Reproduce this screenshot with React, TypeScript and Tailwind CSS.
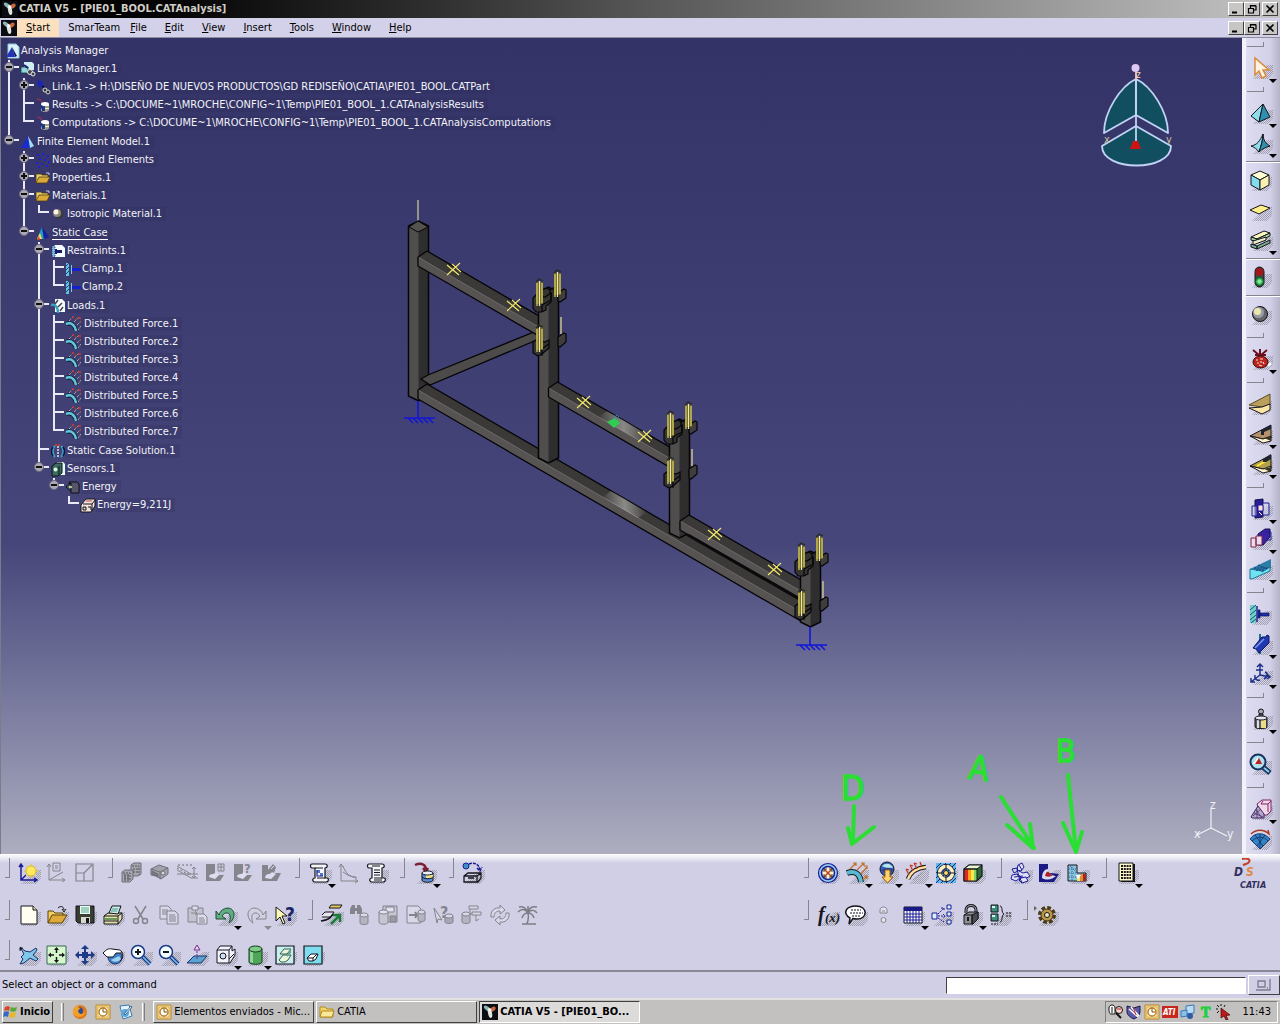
import React from 'react';

const K = '#15151c';
const G = '#84848c';
const N = '#1c1c96';

// ---- toolbar glyphs, all on a 24x24 grid ----
const glyphs: Record<string, React.ReactNode> = {
    // bottom, row 1
    axisSun: (<>
        <path d="M4 3v16h16M2 6l2-3 2 3M17 17l3 2-3 2M4 19l5-5" fill="none" stroke={N} strokeWidth="1.5" />
        <path d="M14 3v14M7 10h14M9 5l10 10M19 5L9 15" stroke="#e6cf3a" />
        <circle cx="14" cy="10" r="5" fill="#ffe95c" stroke="#d8b92c" />
    </>),
    axisDoc: (<g fill="none" stroke={G}>
        <path d="M4 3v16h16M2 6l2-3 2 3M17 17l3 2-3 2M4 19l14-8M8 2h7v8H8zM10 5h3M10 7h3" />
    </g>),
    frame: (<path d="M3 3h17v17H3zM3 12h8v8M11 12l8-8" fill="none" stroke={G} strokeWidth="1.2" />),
    boxes: (<g fill="#a5a5ad" stroke="#6f6f78">
        <path d="M11 4l3-2h7v11l-3 2h-7z" /><path d="M2 11l3-2h8v9l-3 3H2z" />
        <path d="M12 5h7v9M3 12h7v8M13 8h5M13 11h5M4 15h6M4 18h6M5 13v7M8 13v7" fill="none" stroke="#55555e" strokeDasharray="2 1" />
    </g>),
    shell: (<g stroke="#6f6f78">
        <path d="M3 8l8-4 9 3v6l-7 5-5-3-5-1z" fill="#a2a2aa" /><path d="M3 8l9 3 8-4M12 11v7" fill="none" /><circle cx="15" cy="12" r="2" fill="#d9d8ea" /><path d="M4 10l6 3v3l-6-3z" fill="#777780" />
    </g>),
    section: (<g fill="none" stroke={G}>
        <path d="M1 5l14 8h7M1 9l14 8h7M18 6v11M16 8l2-2 2 2M16 15l2 2 2-2M1 13h14" /><path d="M1 7l14 8M2 4h14" stroke="#6f6f78" strokeDasharray="2 2" />
    </g>),
    vmA: (<g><path d="M2 3h9v9h4v2h5l-4 6H2z" fill="#85858e" /><path d="M5 16c1-5 4-1 7-5l4 2-5 5z" fill="#dddcf0" /><path d="M14 3h6v7h-6zM14 6h6M17 3v7" fill="none" stroke={G} /></g>),
    vmB: (<g><path d="M2 3h9v9h4v2h5l-4 6H2z" fill="#85858e" /><path d="M5 16c1-5 4-1 7-5l4 2-5 5z" fill="#dddcf0" /><text x="12" y="12" fontSize="13" fontWeight="bold" fill="#85858e">?</text></g>),
    vmC: (<g><path d="M2 4h6v5l5-6 3 3-2 6h7l-4 8H2z" fill="#85858e" /><path d="M5 17c1-6 4-2 7-6l4 2-5 5z" fill="#dddcf0" /><path d="M11 8l3-3" stroke="#dddcf0" /></g>),
    reportPic: (<g stroke={K} strokeWidth="1.200">
        <path d="M4 3h13c3 0 3 4 0 4v10h2c2 0 2 4-1 4H7c-3 0-3-4 0-4V7H4c-2 0-2-4 0-4z" fill="#f4f4fa" /><path d="M7 7h8M9 17h8" fill="none" /><path d="M9 9h3v3H9zM12 12h3v3h-3z" fill="#4a7bd0" stroke="none" /><path d="M9 9v6h6" stroke={N} fill="none" />
    </g>),
    graph: (<path d="M4 3v17h17M2 6l2-3 2 3M18 18l3 2-3 2M6 5c3 8 7 11 14 12M6 11c4 3 8 5 13 5" fill="none" stroke={G} />),
    reportTxt: (<g stroke={K} strokeWidth="1.200">
        <path d="M4 3h13c3 0 3 4 0 4v10h2c2 0 2 4-1 4H7c-3 0-3-4 0-4V7H4c-2 0-2-4 0-4z" fill="#f4f4fa" /><path d="M9 9h6M9 11.500h6M9 14h6M7 5h8M9 17h8M9 19h8" fill="none" />
    </g>),
    dbArrow: (<g>
        <path d="M2 4c7-3 11 0 11 5M10 7l3 4 2-4" fill="none" stroke="#7d1f33" strokeWidth="2.4" />
        <path d="M9 12v7c0 3 11 3 11 0v-7z" fill="#5b8bd0" stroke={K} /><path d="M13 14h7v3h-7z" fill="#f1e58a" /><ellipse cx="14.500" cy="12" rx="5.500" ry="2" fill="#e9f2fb" stroke={K} /><path d="M9 15.500c0 3 11 3 11 0" fill="none" stroke={K} />
    </g>),
    boxRot: (<g fill="none" stroke={K}>
        <circle cx="5" cy="5" r="3" fill="#3d8fc4" stroke={N} /><path d="M8 3c5-2 10 0 11 6M16 7l3 3 2-4" stroke={N} strokeWidth="1.500" strokeDasharray="3 1" /><path d="M3 15l4-3h13v5l-3 4H3zM3 15h13v6M16 15l4-3M7 17h6" strokeWidth="1.300" />
    </g>),
    mesh: (<g>
        <circle cx="12" cy="12" r="9.500" fill="#8fd0ec" stroke={N} strokeWidth="1.200" /><circle cx="12" cy="12" r="6.500" fill="#fff0cd" stroke={N} strokeWidth="1.500" /><path d="M8.500 8.500l7 7M15.500 8.500l-7 7" stroke="#b4471d" strokeWidth="1.500" /><path d="M8 11V8h3M13 8h3v3M16 13v3h-3M11 16H8v-3" stroke={K} fill="none" strokeWidth=".8" />
    </g>),
    distForce: (<g>
        <path d="M2 12c8-3 13 1 14 9" fill="none" stroke={K} strokeWidth="6" /><path d="M2 12c8-3 13 1 14 9" fill="none" stroke="#59b8d4" strokeWidth="4" />
        <path d="M5 8l6-6M12 9l7-7M16 13l6-7M18 19l4-4M8 2h3v3M16 2h3v3M19 5h3v3M19 15h3v3" stroke="#c07024" fill="none" strokeWidth="1.200" />
    </g>),
    sphereDown: (<g>
        <circle cx="12" cy="8" r="7" fill="#2e63b8" stroke={K} /><path d="M7 5c4-4 10-2 11 2-3-1-5 1-11-2z" fill="#b9e6ee" /><path d="M6 9c3 2 4 4 6 5 3 0 5-3 6-5-4-3-8-2-12 0z" fill="#2a3f8f" />
        <path d="M10 9h5v7h3l-5.500 6L7 16h3z" fill="#ffd36b" stroke="#9a5d14" />
    </g>),
    beamForce: (<g fill="none">
        <path d="M3 18c3-8 9-11 18-12" stroke={K} strokeWidth="4.500" /><path d="M3 18c3-8 9-11 18-12" stroke="#ffe0a0" strokeWidth="2.500" />
        <path d="M4 14L1 8M8 10L5 4M12 8L9 2M17 6l-2-5M1 8l3 1M5 4l3 1M9 2l3 1" stroke="#c0371d" strokeWidth="1.200" />
        <path d="M8 19l10-8" stroke={G} strokeDasharray="2 1" />
    </g>),
    wheel: (<g>
        <rect x="2" y="2" width="20" height="20" fill="#5fb9e6" /><path d="M2 7l5-5M2 12L12 2M2 17L17 2M2 22L22 2M7 22L22 7M12 22l10-10M17 22l5-5" stroke={N} />
        <circle cx="12" cy="12" r="6.500" fill="none" stroke={K} strokeWidth="5" /><circle cx="12" cy="12" r="6.500" fill="none" stroke="#fff0c4" strokeWidth="3.500" /><path d="M12 3v18M3 12h18" stroke={K} /><circle cx="12" cy="12" r="2.500" fill="#ffd36b" stroke={K} />
    </g>),
    rainbow: (<g>
        <path d="M2 8l5-4h13v11l-5 5H2z" fill="#2c6a34" stroke={K} strokeWidth="1.200" /><path d="M2 8h4v12H2z" fill="#d92c1d" /><path d="M6 8h3v12H6z" fill="#ffa21f" /><path d="M9 8h3v12H9z" fill="#ffe94a" /><path d="M12 8h3v12h-3z" fill="#7ed66b" /><path d="M2 8l5-4h13l-5 4z" fill="#e8f5d0" stroke={K} /><path d="M2 8h13v12H2z" fill="none" stroke={K} />
    </g>),
    figure: (<g fill="#dfe0f6" stroke={N}>
        <path d="M9 4l4-2 2 4-3 4-4-1z" /><path d="M8 9l6 3 4-1 3 4-5 3-6-3z" /><path d="M8 13l-5 1-1 4 5 2 5-4z" /><path d="M12 17l5-1 2 4-6 2-3-3z" /><path d="M3 8l5-1 1 3-4 2zM10 4l3 5M5 16l9-1M8 13l5 8" fill="none" />
    </g>),
    vonMises: (<g>
        <path d="M2 3h9v9h3l8 1-5 8H2z" fill="#1a1a86" /><path d="M5 17c0-6 3-9 6-9v4c4 1 5 3 8 3-3 3-9 5-14 2z" fill="#d8dcf2" /><path d="M8 15c1-4 2-5 4-4 0 2 3 3 4 3-2 2-5 2-8 1z" fill="#b02020" />
    </g>),
    deform: (<g>
        <path d="M2 4h9v8h9v8H2z" fill="#8cc3dc" stroke={K} /><path d="M3 8h8M3 12h8M3 16h10M6 4v16M4 5l7 7" stroke="#2a6a94" strokeDasharray="1 1" />
        <path d="M11 15h3v5h-3z" fill="#e7e46a" /><path d="M14 13h3v7h-3z" fill="#e08a3a" /><path d="M17 13h3v7h-3z" fill="#a8261f" /><path d="M10 14h5l-3 4z" fill="#fff" />
    </g>),
    calc: (<g><path d="M6 3h14v18H6z" fill={K} /><path d="M4 2h14v18H4z" fill="#fdf8c8" stroke={K} /><path d="M6 5h10M6 8h10M6 11h10M6 14h10M6 17h10" stroke={K} strokeWidth="2" strokeDasharray="2 .8" /></g>),
    // bottom, row 2
    newDoc: (<g><path d="M4 3h12l4 4v14H4z" fill="#fffef0" stroke={K} /><path d="M16 3v4h4" fill="#e6e3b0" stroke={K} /></g>),
    open: (<g stroke="#5a430c"><path d="M3 20V8h5l2 2h8v3" fill="#f1cf5e" /><path d="M3 20l4-8h15l-5 8z" fill="#e0a93c" /><path d="M13 5c3-3 6-1 6 2M17 6l2 3 2-3" fill="none" stroke={K} /></g>),
    save: (<g><path d="M3 3h18v17H5l-2-2z" fill="#3b3d33" stroke={K} /><path d="M7 3h10v8H7z" fill="#eafff6" /><path d="M8 5h8M8 7h8M8 9h8" stroke="#58a08c" /><path d="M8 14h9v6H8z" fill="#d7d8cd" /><path d="M13 15h3v5h-3z" fill={K} /></g>),
    print: (<g stroke={K}><path d="M3 13l4-3h14v6l-4 5H3z" fill="#e4dfae" /><path d="M8 10l3-7h9l-3 8z" fill="#cbeee8" /><path d="M11 6h6M10 8h6" stroke="#439788" /><path d="M3 13h14l4-3M17 13v8" fill="none" /><path d="M4 15h12v2H4z" fill="#6b9a58" stroke="none" /><path d="M3 18h14" /></g>),
    cut: (<g fill="none" stroke={G} strokeWidth="1.500"><path d="M6 3l8 13M17 3L9 16" /><circle cx="7" cy="18" r="2.500" /><circle cx="16" cy="18" r="2.500" /></g>),
    copy: (<g stroke={G} fill="#d7d6ea"><path d="M3 3h8l3 3v10H3z" /><path d="M5 7h6M5 9h6M5 11h6" /><path d="M10 8h8l3 3v10H10z" /><path d="M12 12h6M12 14h7M12 16h7M12 18h7" /></g>),
    paste: (<g stroke={G} fill="#c3c2d2"><path d="M3 5h15v14H3z" /><path d="M7 3h6v4H7z" fill="#dddcee" /><path d="M12 11h7l3 3v7H12z" fill="#dddcee" /><path d="M14 15h5M14 17h6M14 19h6M6 10h6l-2-2M12 10l-2 2" fill="none" /></g>),
    undo: (<g><path d="M5 12c2-8 14-10 15-1 0 5-3 8-5 9 2-4 2-11-3-10-2 0-3 2-4 3l4 3H2V8z" fill="#5fae84" stroke="#1f4a34" /></g>),
    redo: (<g><path d="M19 12C17 4 5 2 4 11c0 5 3 8 5 9-2-4-2-11 3-10 2 0 3 2 4 3l-4 3h10V8z" fill="#d2d1e4" stroke={G} /></g>),
    what: (<g><path d="M3 4v14l4-4 3 7 2-1-3-7h5z" fill="#fff9b8" stroke={K} /><text x="12" y="18" fontSize="19" fontWeight="bold" fill="#1b2468">?</text></g>),
    swap: (<g><path d="M9 5l2-3h11l-2 3H9z" fill="#e7cf62" stroke={K} /><path d="M2 12l3-3h9l-3 5H2" fill="#e2e1ec" stroke={K} /><path d="M1 18c6-1 9-2 12-7" fill="none" stroke={K} strokeWidth="1.500" /><path d="M11 21l8-8M13 12h7v7" fill="none" stroke="#1d7a3a" strokeWidth="2.500" /></g>),
    findDb: (<g fill={G}><path d="M2 6l2-4h3v9H2zM9 2h3l2 4v5H9zM7 5h2v3H7z" /><path d="M12 12v8c0 2 8 2 8 0v-8z" fill="#b4b3c2" stroke={G} /><ellipse cx="16" cy="12" rx="4" ry="2" fill="#dcdbec" stroke={G} /></g>),
    saveDb: (<g stroke={G} fill="#c6c5d4"><path d="M7 3h14v16H7z" /><path d="M10 4h8v5h-8z" fill="#e2e1f2" /><path d="M3 9v10c0 3 9 3 9 0V9z" /><ellipse cx="7.500" cy="9" rx="4.500" ry="2" fill="#e2e1f2" /><path d="M14 13h6v6h-6z" fill="#9a9aa4" /></g>),
    docDb: (<g stroke={G} fill="#d9d8ea"><path d="M3 3h11l3 3v14H3z" /><path d="M5 12h8l-2-3M13 12l-2 3" strokeWidth="2" fill="none" /><path d="M14 9v8c0 2 7 2 7 0V9z" fill="#b4b3c2" /><ellipse cx="17.500" cy="9" rx="3.500" ry="2" /></g>),
    askDb: (<g stroke={G} fill="#d9d8ea"><path d="M2 5l8 12-4-1-1 4z" /><text x="8" y="15" fontSize="16" fontWeight="bold" fill={G} stroke="none">?</text><path d="M13 13v6c0 2 8 2 8 0v-6z" fill="#a7a6b4" /><ellipse cx="17" cy="13" rx="4" ry="2" /></g>),
    treeDb: (<g stroke={G} fill="#d9d8ea"><path d="M9 3h9v3H9zM12 9h9v3h-9zM10 6v5h2M16 12v6l3-2" /><path d="M2 11v8c0 2 8 2 8 0v-8z" fill="#b4b3c2" /><ellipse cx="6" cy="11" rx="4" ry="2" /></g>),
    refresh: (<g fill="#d9d8ea" stroke={G}><path d="M3 14c-1-6 4-10 9-9V2l5 5-5 4V8c-4 0-6 2-6 6z" /><path d="M21 10c1 6-4 10-9 9v3l-5-5 5-4v3c4 0 6-2 6-6z" /></g>),
    palm: (<g stroke="#7d7d86" fill="none" strokeWidth="1.500"><path d="M12 10c1 4 0 8-1 11M12 10C9 5 5 6 2 9M12 10c-2-6-6-7-9-6M12 10c1-6 5-7 9-6M12 10c3-4 7-3 9 0M12 10c-3 0-5 2-6 5M12 10c3 0 5 2 6 5M12 9V3M6 21h14" /></g>),
    fx: (<g fill={K} fontStyle="italic" fontWeight="bold" fontFamily="Liberation Serif, serif"><text x="2" y="18" fontSize="20">f</text><text x="9" y="19" fontSize="13">(x)</text></g>),
    bubble: (<g><path d="M12 3c12 0 12 13 1 13-2 0-3 0-4-.5L5 21l1-6C-2 10 2 3 12 3z" fill="#fff" stroke={K} strokeWidth="1.500" /><path d="M7 7h10M6 10h13M8 13h8" stroke={K} strokeDasharray="2 1" /></g>),
    lockOff: (<g stroke={G} fill="#e3e2f2"><path d="M8 10V7c0-4 7-4 7 0v3H8zM10 8h3" /><circle cx="11.500" cy="17" r="2.500" /></g>),
    table: (<g><path d="M3 4h18v16H3z" fill="#fff" stroke={K} /><path d="M3 4h18v4H3z" fill="#1a1a86" /><path d="M3 11h18M3 14h18M3 17h18M6 8v12M9 8v12M12 8v12M15 8v12M18 8v12" stroke={N} /></g>),
    relations: (<g fill="#d8f0f4" stroke={N}><path d="M2 10h5v6H2zM17 2h4v4h-4zM17 9h4v4h-4zM17 17h4v4h-4z" /><path d="M8 11l6-6M8 13h7M8 15l6 4M11 5h3v3M13 11l2 2-2 2" fill="none" strokeDasharray="2 1" /></g>),
    lock: (<g stroke={K}><path d="M7 10V7c0-6 10-6 10 0v3" fill="none" strokeWidth="3" /><path d="M7 10V7c0-6 10-6 10 0v3" fill="none" stroke="#a9aaae" /><path d="M5 12l5-3h9v7l-5 5H5z" fill="#8d8f93" /><path d="M13 12l6-3v7l-5 5h-1z" fill="#4a4b50" /><path d="M5 12h8v9" fill="none" /><path d="M9 14v4" strokeWidth="2" /></g>),
    brace: (<g><path d="M3 2h7v7H3zM3 11h7v7H3z" fill="#3e8f7c" stroke={K} /><path d="M4 3h3v2H4zM4 12h3v2H4z" fill="#d8f4ec" /><path d="M12 3c3 0 1 7 4 8-3 1-1 8-4 8" fill="none" stroke={K} /><path d="M18 10h5M18 13h5M3 21h7" stroke={K} strokeDasharray="2 1" /></g>),
    gear: (<g><path d="M-1 3l3 2-3 3z" fill="#6a6a50" /><circle cx="12" cy="12" r="7" fill="none" stroke="#4b3a12" strokeWidth="4" strokeDasharray="3.500 2" /><circle cx="12" cy="12" r="6" fill="#b8964c" stroke="#4b3a12" /><circle cx="12" cy="12" r="2.500" fill="#f3e7bc" stroke={K} /></g>),
    // bottom, row 3
    plane: (<g><path d="M3 4l5 4 5 1 6-4 1 2-4 5 5 4-2 2-6-3-6 5-4 1 3-5-2-2 3-3z" fill="#7fc8ea" stroke="#1c2f66" /><path d="M4 4L3 8M2 6l4-1" stroke={K} /></g>),
    fit: (<g><path d="M2 3h19v18H2z" fill="#d6f7cb" stroke="#336a52" /><path d="M11.500 5v5M11.500 14v5M4 12h5M14 12h5" stroke={K} strokeWidth="1.500" /><path d="M9 7l2.500-3L14 7zM9 17l2.500 3 2.500-3zM6 9.500L3 12l3 2.500zM17 9.500l3 2.500-3 2.500z" fill={K} /></g>),
    pan: (<g fill="#1d3b86"><path d="M11 5h2v14h-2zM5 11h14v2H5z" /><path d="M8 6l4-4 4 4zM8 18l4 4 4-4zM6 8l-4 4 4 4zM18 8l4 4-4 4z" /><path d="M9 9h6v6H9z" /></g>),
    rotate: (<g stroke={K}><circle cx="14" cy="14" r="7" fill="#3e7fc8" stroke="#1c2f66" /><path d="M10 17c3 3 8 2 10-1l-2-3z" fill="#9fd2f0" stroke="none" /><path d="M2 10c3-3 5-5 9-4l8 1c2 1 2 3 0 3h-4l-3 4H6z" fill="#fff" /><path d="M20 8c3 3 2 8-1 10" fill="none" /></g>),
    zoomIn: (<g><path d="M14 14l7 7" stroke="#1b3a86" strokeWidth="4" /><path d="M14 14l7 7" stroke="#7fc4ea" strokeWidth="1.500" /><circle cx="9" cy="9" r="6.500" fill="#f4fbff" stroke="#1b3a86" strokeWidth="1.500" /><path d="M9 6v6M6 9h6" stroke={K} strokeWidth="2" /></g>),
    zoomOut: (<g><path d="M14 14l7 7" stroke="#1b3a86" strokeWidth="4" /><path d="M14 14l7 7" stroke="#7fc4ea" strokeWidth="1.500" /><circle cx="9" cy="9" r="6.500" fill="#f4fbff" stroke="#1b3a86" strokeWidth="1.500" /><path d="M6 9h6" stroke={K} strokeWidth="2" /></g>),
    normal: (<g><path d="M2 20l7-7h13l-6 7z" fill="#5aa3d0" stroke="#1c2f66" /><path d="M12 16V7" stroke="#7a2c8c" strokeDasharray="2 1" /><path d="M9 7l3-5 3 5z" fill="#e9d4f4" stroke="#7a2c8c" /></g>),
    isoView: (<g stroke={K} fill="#f2f3fb"><path d="M3 7l3-4h12v5l3-2v6l-5 8H3z" /><path d="M3 7h12v13M15 7l3-4M15 16l5-5" fill="none" /><circle cx="9" cy="13" r="3" fill="#cfe0f4" /></g>),
    shading: (<g><path d="M5 6v13c0 3 13 3 13 0V6z" fill="#4fa65a" stroke="#153a1c" /><path d="M6 7v12l3 1V8z" fill="#8fd69a" /><ellipse cx="11.500" cy="6" rx="6.500" ry="3" fill="#7ecb87" stroke="#153a1c" /></g>),
    hideShow: (<g><path d="M3 3h18v18H3z" fill="#c9eef0" stroke={K} strokeWidth="1.200" /><path d="M7 11l4-5h7l-4 5z" fill="#e9f7d8" stroke="#356054" /><path d="M6 17l4-5h8l-3 5-3 2H8z" fill="#e9f7d8" stroke="#356054" /><path d="M14 12l4-6v4l-4 4z" fill="#6aa590" /></g>),
    swapSpace: (<g><path d="M3 3h18v18H3z" fill="#7fdcee" stroke={K} strokeWidth="1.200" /><path d="M6 15l4-4h7l-2 5-3 2H8z" fill="#fff" stroke={K} /><path d="M6 15h6l4-4M12 15v3" fill="none" stroke={K} /></g>),
    // right toolbar
    arrow: (<path d="M6 2v17l4-4 3 7 4-2-3-6h6z" fill="#fff4e2" stroke="#d98a3c" strokeWidth="1.500" />),
    tetra: (<g stroke={K}><path d="M2 15L14 3l-4 18z" fill="#8fdcea" /><path d="M14 3l7 13-11 5z" fill="#2f8fae" /></g>),
    tetra2: (<g stroke={K}><path d="M2 15c6-1 9-5 12-12 0 6-2 12-4 18-2-3-5-5-8-6z" fill="#8fdcea" /><path d="M14 3c0 6 3 10 7 12-4 1-8 3-11 6 2-6 4-12 4-18z" fill="#2f8fae" /></g>),
    cube: (<g stroke={K}><path d="M3 7l9-4 9 4-9 5z" fill="#fffbd0" /><path d="M3 7l9 5v10l-9-5z" fill="#83dcec" /><path d="M21 7l-9 5v10l9-5z" fill="#f8efb0" /></g>),
    sheet: (<path d="M2 12l11-5 9 3-11 6z" fill="#fdf08a" stroke={K} />),
    ibeam: (<g stroke={K}><path d="M2 9L15 3l6 2-13 6z" fill="#fbf7c0" /><path d="M2 9l6 2v3l-6-2zM8 11l13-6v3L8 14z" fill="#a8cf98" /><path d="M4 13v4l13-5V9z" fill="#e9efc8" /><path d="M2 16l6 2v3l-6-2zM8 18l13-6v3L8 21z" fill="#79b08a" /></g>),
    traffic: (<g><rect x="7" y="2" width="9" height="20" rx="4.500" fill="#3b4a42" stroke={K} /><circle cx="11.500" cy="7" r="4" fill="#a3161c" /><circle cx="11.500" cy="16.500" r="4" fill="#3dbb5c" stroke="#0d4f24" /><circle cx="11.500" cy="16.500" r="2" fill="#8ae8a0" /></g>),
    ball: (<g><circle cx="12" cy="12" r="7.500" fill="#62646a" stroke={K} /><circle cx="10.500" cy="10.500" r="5.500" fill="#9a9ca0" /><circle cx="9.500" cy="9.500" r="3.500" fill="#ece6b0" /></g>),
    bug: (<g><path d="M4 3l6 5M11 2v6M18 3l-6 5M6 8h11" stroke="#6a1120" strokeWidth="2" /><ellipse cx="11.500" cy="15" rx="7.500" ry="6" fill="#b8241f" stroke="#3c070c" /><path d="M7 13h2M8 16h2M10 18l3 1M11 12h3M14 15l1 2M12 14v2" stroke="#ffd9c8" strokeWidth="1.200" fill="none" /><path d="M19 19l3-3" stroke="#fff" strokeWidth="2" /></g>),
    slab: (<g><path d="M1 13L22 2v11l-8 2z" fill="#b8a05c" stroke="#5d4a1c" /><path d="M1 16l13-1 8-3v6l-8 4z" fill="#fbe6a8" stroke={K} /></g>),
    slab2: (<g><path d="M1 14L22 3v13l-8 1z" fill="#b5906a" stroke={K} /><path d="M1 14l13 3 8-3v5l-8 2z" fill="#fff4d0" stroke={K} /><path d="M12 8l10-5v4l-7 3v3h-3z" fill="#20242e" /><path d="M15 16l7 3v-5z" fill="#3a3320" /></g>),
    slab3: (<g><path d="M1 14L22 3v13l-8 1z" fill="#b3a04a" stroke={K} /><path d="M1 14l13 3 8-3v5l-8 2z" fill="#fff4d0" stroke={K} /><path d="M8 14l9-5" stroke="#ffe640" strokeWidth="2" /><path d="M14 7l8-5v5l-5 3h-3z" fill="#20242e" /><path d="M15 17l7 3v-5z" fill="#3a3320" /></g>),
    partA: (<g><path d="M6 3l8-1v18l-8 1z" fill="#2a1f92" stroke="#140d4e" /><path d="M14 6h6v12h-6M3 9h5v10H3z" fill="#cfd0ee" fillOpacity=".5" stroke={N} /><path d="M9 8h5v6H9z" fill="#ffe1d8" stroke={N} /><path d="M10 15l3 3" stroke="#fff" /></g>),
    partB: (<g><path d="M9 7l7-5h5v8l-7 8H9z" fill="#3a22a0" stroke="#140d4e" /><path d="M2 11h5v9H2zM7 9h6v9H7z" fill="#e9dcee" stroke="#7c2244" /><path d="M17 5h5v8h-5" fill="none" stroke={N} /></g>),
    plate: (<g><path d="M1 12L22 2v9l-10 6z" fill="#2b7fa6" /><path d="M1 12l12 2v1l8-5v4L3 22H1z" fill="#6fe3f2" stroke="#1f6f94" /><path d="M5 11h15M7 13h9M9 8l9 4" stroke="#123c78" strokeDasharray="2 1" /></g>),
    clamp: (<g><path d="M2 3h6v18H2z" fill="#6fd0c8" /><path d="M2 8l6-5M2 13l6-5M2 18l6-5M3 21l5-4" stroke="#1b4f78" /><path d="M9 4v16" stroke={N} strokeWidth="1.500" /><path d="M10 8h2v8h-2zM12 11h9v3h-9z" fill="#1d2fa8" stroke="#0d1560" strokeWidth=".7" /></g>),
    slider: (<g><path d="M11 2v20" stroke="#1f6a94" strokeWidth="2" /><path d="M4 16L13 5h4l1-2 2 1v7L10 21l-3-4z" fill="#2038b0" stroke="#0d1560" /><path d="M6 16l9-9" stroke="#7f9cf0" strokeWidth="1.500" /></g>),
    axes3: (<g fill="none" stroke="#1d2f88" strokeWidth="1.500"><path d="M11 13V2M8 5l3-3 3 3M11 13l10 2M18 12l3 3-3 2M11 13l-9 7M2 16v4h4M7 8h7M16 10c3 1 3 5-1 7M6 13c-1 4 2 6 5 5" /></g>),
    mass: (<g stroke={K}><circle cx="12" cy="4.500" r="2.500" fill="#a9a9b4" /><path d="M10 7h4v3h-4z" fill="#6c6c78" /><path d="M6 11v9c0 2 12 2 12 0v-9z" fill="#5a5a66" /><path d="M12 12h5v9h-5z" fill="#e9dc88" stroke="none" /><path d="M8 12h2v9H8z" fill="#dcdce8" stroke="none" /><ellipse cx="12" cy="11" rx="6" ry="2" fill="#e9e9f2" /></g>),
    loupe: (<g><path d="M15 15l7 6" stroke="#17335e" strokeWidth="5" /><path d="M15 15l6 5" stroke="#8ad0ea" strokeWidth="2" /><circle cx="10" cy="10" r="7.500" fill="#aee0ee" stroke="#17335e" strokeWidth="2" /><path d="M5 12l5-7v7z" fill="#fff" /><path d="M7 12l4-6 3 6z" fill="#c01f1f" /></g>),
    meshBox: (<g><path d="M8 7l5-4h9v11l-4 4h-6z" fill="#f0d8e8" stroke="#7c2268" /><path d="M12 7h7v8M12 7l2-3M19 7l3-3" fill="none" stroke="#7c2268" /><path d="M2 20l7-11 6 8v4H3z" fill="#b8a8cc" stroke="#3a2260" /><path d="M5 16l9 4M7 13l6 8M4 19l8-7M8 21v-9" stroke="#3a2260" strokeWidth=".7" /></g>),
    fan: (<g><path d="M2 12c5-7 14-7 20 0l-10 10z" fill="#3186c8" stroke="#1b3a70" /><path d="M7 8l8 11M12 7v14M17 8L9 19M4 14c5-5 12-5 16 0" stroke="#1b3a70" fill="none" /><path d="M3 7c5-5 13-5 18 0M17 4l4 3-1-4" fill="none" stroke="#a83a20" strokeWidth="1.500" /></g>),
};

const Glyph: React.FC<{ name: string; shadow?: boolean }> = ({ name, shadow = true }) => (
    <svg viewBox="0 0 24 24" className="h-6 w-6 shrink-0 overflow-visible" aria-hidden="true">
        {shadow && <path d="M9 18l9-9h6v8l-5 6H4z" fill="url(#dither)" />}
        {glyphs[name]}
    </svg>
);

const disabled = ['axisDoc', 'frame', 'boxes', 'shell', 'section', 'vmA', 'vmB', 'vmC', 'graph', 'cut', 'copy', 'paste', 'redo', 'findDb', 'saveDb', 'docDb', 'askDb', 'treeDb', 'refresh', 'palm', 'lockOff'];

// "name+" carries a drop-down arrow
const Tool: React.FC<{ id: string }> = ({ id }) => {
    const menu = id.endsWith('+');
    const name = id.replace('+', '');
    const off = disabled.includes(name);
    return (
        <button type="button" aria-label={name} disabled={off} className={`relative flex h-[30px] items-center justify-center ${menu ? 'w-[30px]' : 'w-7'}`}>
            <Glyph name={name} shadow={!off} />
            {menu && <i className={`absolute -right-px bottom-0 h-0 w-0 border-x-4 border-t-4 border-x-transparent ${off ? 'border-t-[#8b8b93]' : 'border-t-black'}`} />}
        </button>
    );
};

const Group: React.FC<{ items: string }> = ({ items }) => (
    <div role="toolbar" className="flex">
        <div className="w-[14px] pl-1">
            <div className="h-5 w-[5px] border-r border-b border-[#85848f]" />
        </div>
        {items.split(' ').map((id) => <Tool key={id} id={id} />)}
    </div>
);

const rows: [string[], string[]][] = [
    [
        ['axisSun axisDoc frame', 'boxes shell section vmA vmB vmC', 'reportPic+ graph reportTxt', 'dbArrow+', 'boxRot'],
        ['mesh distForce+ sphereDown+ beamForce+ wheel rainbow', 'figure vonMises deform+', 'calc+'],
    ],
    [
        ['newDoc open save print cut copy paste undo+ redo+ what', 'swap findDb saveDb docDb askDb treeDb refresh palm'],
        ['fx bubble lockOff table+ relations lock+ brace', 'gear'],
    ],
    [['plane fit pan rotate zoomIn zoomOut normal isoView+ shading+ hideShow swapSpace'], []],
];

// '-' is a short handle, '=' a full divider
const rightTools = ['-', 'arrow+', '-', 'tetra+', 'tetra2+', '=', 'cube', 'sheet', 'ibeam+', '=', 'traffic', '=', 'ball', '-', 'bug+', '-', 'slab', 'slab2+', 'slab3+', '-', 'partA+', 'partB+', 'plate+', '-', 'clamp', 'slider+', 'axes3+', '-', 'mass+', '-', 'loupe', '-', 'meshBox+', 'fan'];

// ---- specification tree ----
interface TreeItem {
    label: string;
    icon: string;
    knob?: '+' | '-';
    wide?: boolean;
    underline?: boolean;
    children?: TreeItem[];
}

const tree: TreeItem[] = [
    {
        label: 'Links Manager.1', icon: 'links', knob: '-', children: [
            { label: 'Link.1 -> H:\\DISEÑO DE NUEVOS PRODUCTOS\\GD REDISEÑO\\CATIA\\PIE01_BOOL.CATPart', icon: 'link', knob: '+' },
            { label: 'Results -> C:\\DOCUME~1\\MROCHE\\CONFIG~1\\Temp\\PIE01_BOOL_1.CATAnalysisResults', icon: 'data' },
            { label: 'Computations -> C:\\DOCUME~1\\MROCHE\\CONFIG~1\\Temp\\PIE01_BOOL_1.CATAnalysisComputations', icon: 'data' },
        ],
    },
    {
        label: 'Finite Element Model.1', icon: 'fem', knob: '-', children: [
            { label: 'Nodes and Elements', icon: 'nodes', knob: '+' },
            { label: 'Properties.1', icon: 'folder', knob: '+' },
            { label: 'Materials.1', icon: 'folder', knob: '-', children: [{ label: 'Isotropic Material.1', icon: 'material' }] },
            {
                label: 'Static Case', icon: 'case', knob: '-', underline: true, children: [
                    {
                        label: 'Restraints.1', icon: 'restraints', knob: '-', children: [
                            { label: 'Clamp.1', icon: 'clampS' },
                            { label: 'Clamp.2', icon: 'clampS' },
                        ],
                    },
                    {
                        label: 'Loads.1', icon: 'loads', knob: '-',
                        children: [1, 2, 3, 4, 5, 6, 7].map((n) => ({ label: `Distributed Force.${n}`, icon: 'force', wide: true })),
                    },
                    { label: 'Static Case Solution.1', icon: 'solution' },
                    {
                        label: 'Sensors.1', icon: 'sensors', knob: '-', children: [
                            { label: 'Energy', icon: 'sensor', knob: '-', children: [{ label: 'Energy=9,211J', icon: 'energy' }] },
                        ],
                    },
                ],
            },
        ],
    },
];

const treeGlyphs: Record<string, React.ReactNode> = {
    root: (<g><path d="M3 1h8l3 3v11H3z" fill="#d9f2f8" stroke="#8fc6dc" /><path d="M1 14L7 4l3 10z" fill="#2433b8" /><path d="M7 4l5 9-2 1z" fill="#0d1560" /></g>),
    links: (<g><path d="M4 1h8l2 2v6H4z" fill="#cfeef2" /><path d="M1 6h7v6H1z" fill="#8fd6d8" stroke="#163a4a" strokeWidth=".8" /><circle cx="10" cy="11" r="2.500" fill="#444" stroke="#e6e6ea" /><circle cx="13" cy="13" r="2" fill="#444" stroke="#e6e6ea" /><path d="M4 4l4 3" stroke="#14246a" strokeWidth="2" /></g>),
    link: (<g><path d="M3 1l4 1 1 5-4 1-2-3z" fill="#1c26b8" /><path d="M7 7l3 2" stroke="#0c1260" strokeWidth="2" /><circle cx="10" cy="11" r="2" fill="#333" stroke="#dcdcdc" /><circle cx="13" cy="13" r="2" fill="#333" stroke="#ccc" /></g>),
    data: (<g><path d="M2 2c3 0 4 1 5 3" stroke="#8a2f5a" fill="none" strokeWidth="1.500" /><path d="M6 7v6c0 2 8 2 8 0V7z" fill="#f0eec8" /><path d="M5 7h5v7H7z" fill="#17318e" /><ellipse cx="10" cy="7" rx="4" ry="2" fill="#fff" /><path d="M8 10h6M9 13h5" stroke="#555" /></g>),
    fem: (<g><path d="M1 14L8 2l2 12z" fill="#1a2bd0" /><path d="M8 2l6 10-4 2z" fill="#9fdcf0" /></g>),
    nodes: (<path d="M2 2h2v2H2zM7 1h2v2H7zM12 3h2v2h-2zM4 6h2v2H4zM9 7h2v2H9zM13 9h2v2h-2zM1 10h2v2H1zM6 11h2v2H6zM11 13h2v2h-2zM3 14h2v2H3zM6 4h1v1H6zM11 5h1v1h-1z" fill="#1d22d8" />),
    folder: (<g stroke="#4a3a10" strokeWidth=".8"><path d="M1 13V4h5l1 1h6v3" fill="#e8cf6a" /><path d="M1 13l3-6h11l-3 6z" fill="#d9aa3a" /><path d="M11 3h3v2" fill="none" stroke="#eee" /></g>),
    material: (<g><circle cx="9" cy="8" r="5" fill="#3a3a40" /><circle cx="7" cy="7" r="4" fill="#8b8780" /><circle cx="6" cy="6" r="2.500" fill="#fff3e0" /></g>),
    case: (<g><path d="M2 14L7 2l2 12z" fill="#1fa0c0" /><path d="M7 2l7 10-5 2z" fill="#1420a0" /><path d="M2 14l3-6 2 6z" fill="#f0e060" /><path d="M2 15l2-4 1 4z" fill="#e03a20" /></g>),
    restraints: (<g><path d="M4 2h8l3 3v9H4z" fill="#f4fbff" /><path d="M2 3h3v11H2z" fill="#7fb8d8" stroke="#14246a" strokeWidth=".8" strokeDasharray="1 1" /><path d="M5 6h2v5H5zM7 7h5v3H7z" fill="#16186e" /></g>),
    clampS: (<g><path d="M1 2h3v13H1z" fill="#5fc4e0" /><path d="M1 5l3-3M1 9l3-3M1 13l3-3" stroke="#1a4a90" /><path d="M6.500 4v9" stroke="#7fc4e0" /><path d="M7 7h9v3H7z" fill="#1420d0" /></g>),
    loads: (<g><path d="M5 1h7l3 3v10H5z" fill="#f4fbff" /><path d="M1 7c5-1 7 3 7 8" stroke="#35a0c0" strokeWidth="2.500" fill="none" /><path d="M5 6l3-4M8 9l4-4M10 13l3-4" stroke="#444" strokeWidth="1.500" /></g>),
    force: (<g><path d="M1 8c5-2 9 1 10 7" stroke="#0d2030" strokeWidth="4" fill="none" /><path d="M1 8c5-2 9 1 10 7" stroke="#63c6dc" strokeWidth="2.500" fill="none" /><path d="M4 5l4-4M9 6l5-5M12 9l4-4M13 14l3-4" stroke="#e8c8a0" strokeDasharray="1 1" /><path d="M7 1h2M13 2h3M15 6h1M10 3h1" stroke="#d03a2a" strokeWidth="1.500" /></g>),
    solution: (<g fill="none" strokeWidth="2"><path d="M5 3c-3 2-3 8 0 11" stroke="#3fa0c8" /><path d="M11 3c3 2 3 8 0 11" stroke="#3fa0c8" /><path d="M3 4c-2 3-2 6 0 9M13 4c2 3 2 6 0 9" stroke="#0c1440" strokeWidth="1.500" /><path d="M8 3v12" stroke="#dfe8f8" strokeDasharray="2 1" strokeWidth="1.500" /><path d="M5 2h6" stroke="#c04030" strokeDasharray="2 1" /></g>),
    sensors: (<g><path d="M7 1h6l2 2v11H7z" fill="#e4fbf6" /><path d="M2 5l4-3h6v10l-4 3H2z" fill="#3c6a60" stroke="#0c1414" /><circle cx="5.500" cy="8.500" r="2" fill="#d8f8e8" /><path d="M9 5v9" stroke="#0c1414" /></g>),
    sensor: (<g><path d="M4 3h8l2 2v9H6z" fill="#54546a" stroke="#0c0c14" /><path d="M1 8l5-4v8z" fill="#3f7a78" stroke="#0c0c14" /><path d="M4 8h3" stroke="#f0e0a0" strokeWidth="1.500" /></g>),
    energy: (<g><path d="M1 8l5-6h9v7l-4 6H1z" fill="#f4e4dc" stroke="#14141a" /><path d="M3 7h9l3-4M12 7v7" stroke="#14141a" fill="none" /><path d="M6 4h6" stroke="#c04848" /><path d="M3 10h3v3H3zM8 10h3v3" fill="#cfd8d0" stroke="#14141a" /></g>),
};

const TreeIcon: React.FC<{ name: string }> = ({ name }) => (
    <svg viewBox="0 0 16 16" className="h-4 w-4 shrink-0" aria-hidden="true">{treeGlyphs[name]}</svg>
);

const Knob: React.FC<{ sign: '+' | '-' }> = ({ sign }) => (
    <svg viewBox="0 0 10 10" className="relative h-[10px] w-[10px] shrink-0" aria-hidden="true">
        <circle cx="5" cy="5" r="4.500" fill="#a9a8b4" stroke="#6b6a7a" />
        <path d="M2 5h6" stroke="#111" strokeWidth="2" />
        {sign === '+' && <path d="M5 2v6" stroke="#111" strokeWidth="2" />}
    </svg>
);

const TreeList: React.FC<{ items: TreeItem[]; top?: boolean }> = ({ items, top }) => (
    <ul className={`pb-px ${top ? '' : 'pl-[15px]'}`}>
        {items.map((item) => (
            <li key={item.label} className="relative before:absolute before:top-0 before:bottom-0 before:left-[3px] before:w-[2px] before:bg-[#e9e9f4] last:before:bottom-auto last:before:h-2">
                <div className="flex h-[18px] items-center">
                    <span className="relative flex h-[14px] w-[15px] items-start">
                        <span className="absolute top-[4px] left-[4px] h-[2px] w-[10px] bg-[#e9e9f4]" />
                        {item.knob && <span className="relative -ml-px"><Knob sign={item.knob} /></span>}
                    </span>
                    <TreeIcon name={item.icon} />
                    <span className={`bg-[#2b2b5c]/25 whitespace-nowrap ${item.wide ? 'pl-[3px]' : 'pl-px'} pr-1`}>
                        <span className={item.underline ? 'border-b border-white' : ''}>{item.label}</span>
                    </span>
                </div>
                {item.children && <TreeList items={item.children} />}
            </li>
        ))}
    </ul>
);

// ---- 3D scene ----
const XMark: React.FC<{ x: number; y: number }> = ({ x, y }) => (
    <path d={`M${x - 7} ${y - 4}l12 10M${x - 7} ${y + 6}L${x + 6} ${y - 6}M${x - 2} ${y - 5}l9 8`} stroke="#f5ea6c" strokeWidth="1.100" fill="none" />
);

const Pins: React.FC<{ x: number; y: number }> = ({ x, y }) => (
    <g>
        <path d={`M${x} ${y}h7v22h-7z`} fill="#6b6428" />
        <path d={`M${x + 1} ${y + 1}v23M${x + 6} ${y + 1}v20`} stroke="#ddd262" strokeWidth="1.200" />
        <path d={`M${x + 3.500} ${y - 1}v25`} stroke="#efe9b0" />
        <path d={`M${x} ${y}l3-3 4 2`} stroke="#2b2a1c" fill="none" />
    </g>
);

// top end of a post with its four hooks, drawn relative to the post's top centre
const Hooks: React.FC<{ x: number; y: number }> = ({ x, y }) => (
    <g transform={`translate(${x} ${y})`} stroke="#050508" strokeWidth="1.200">
        <path d="M9 5l6-4 2 1v8l-6 4-2-1z" fill="#3f3e3c" />
        <path d="M9 49l6-4 2 1v8l-6 5-2-1z" fill="#3f3e3c" />
        <path d="M-7 8V2l5-2 3 2v6M1 2l5-3 3 2" fill="#343332" />
        <g stroke="none">
            <Pins x={5} y={-15} />
            <path d="M12 29v17" stroke="#c9c48a" strokeWidth="1.500" />
        </g>
        <path d="M-16 10l3-3 9 2 6-4v9l-5 4v4l-4 2h-6l-3-4z" fill="#353433" />
        <path d="M-16 54l3-2 9 2 4-2v8l-7 6-4 2-5-3z" fill="#353433" />
        <path d="M-7 17l9-5v-7M-7 17v7M-6 60l6-4M-7 61v7" fill="none" />
        <g stroke="none">
            <Pins x={-13} y={-6} />
            <Pins x={-13} y={40} />
        </g>
    </g>
);

const Post: React.FC<{ x: number; top: number; bottom: number }> = ({ x, top, bottom }) => (
    <g>
        <path d={`M${x - 10} ${top + 5}L${x} ${top}l10 5V${bottom - 5}L${x} ${bottom}l-10-5z`} fill="#2f2e2e" />
        <path d={`M${x - 10} ${top + 5}l10 5V${bottom}l-10-5z`} fill="#504e4d" />
        <path d={`M${x - 10} ${top + 5}L${x} ${top}l10 5V${bottom - 5}L${x} ${bottom}l-10-5z`} fill="none" stroke="#050508" strokeWidth="1.500" />
    </g>
);

// square tube running down to the right, slope is the isometric 0.58
const Tube: React.FC<{ x: number; y: number; len: number }> = ({ x, y, len }) => {
    const d = len * 0.58;
    return (
        <g>
            <path d={`M${x} ${y}l9-6l${len} ${d}l-9 6z`} fill="#3a3937" />
            <path d={`M${x} ${y}l${len} ${d}v9l${-len} ${-d}z`} fill="#565352" />
            <path d={`M${x} ${y}l${len} ${d}`} stroke="#6c6967" />
            <path d={`M${x + len} ${y + d + 9}l${-len} ${-d}v-9l9-6l${len} ${d}`} fill="none" stroke="#050508" strokeWidth="1.300" />
        </g>
    );
};

const Ground: React.FC<{ x: number; y: number; h: number }> = ({ x, y, h }) => (
    <path d={`M${x} ${y}v${h}M${x - 14} ${y + h}h31M${x - 10} ${y + h}l5 5M${x - 5} ${y + h}l5 5M${x} ${y + h}l5 5M${x + 5} ${y + h}l5 5M${x + 10} ${y + h}l5 5`} stroke="#1216d8" strokeWidth="1.600" fill="none" />
);

const Model = () => (
    <svg viewBox="400 190 440 470" className="absolute top-[152px] left-[399px] w-[440px]" role="img" aria-label="Frame model">
        <defs>
            <linearGradient id="shine"><stop offset="0" stopColor="#fff" stopOpacity="0" /><stop offset=".5" stopColor="#d8d8d4" stopOpacity=".5" /><stop offset="1" stopColor="#fff" stopOpacity="0" /></linearGradient>
        </defs>
        <path d="M418 222v-22" stroke="#b5b398" strokeWidth="1.500" />
        <Post x={418.500} top={221} bottom={401} />
        <path d="M409 227l9-6 10 6-10 5z" fill="#55534f" stroke="#050508" />
        <path d="M421 379l7-4 106-43 5 1v6L430 385z" fill="#4d4b4a" stroke="#050508" strokeWidth="1.300" />
        <Tube x={418} y={390} len={384} />
        <path d="M602 497l9-6 36 21-9 6z" fill="url(#shine)" />
        <Tube x={418} y={257} len={121} />
        <Post x={548.500} top={287} bottom={463} />
        <Hooks x={549} y={288} />
        <Tube x={548.500} y={388} len={121} />
        <path d="M598 417l9-6 42 24-9 6z" fill="url(#shine)" />
        <Post x={679.500} top={419} bottom={538} />
        <Hooks x={680} y={420} />
        <Tube x={680} y={521} len={121} />
        <path d="M688 535l112 64" stroke="#0a0a0c" strokeWidth="3" />
        <Post x={810.500} top={551} bottom={627} />
        <Hooks x={811} y={552} />
        <XMark x={454} y={269} />
        <XMark x={514} y={305} />
        <XMark x={584} y={402} />
        <XMark x={645} y={436} />
        <XMark x={715} y={534} />
        <XMark x={775} y={569} />
        <path d="M607 422l8-4 5 5-6 5z" fill="#2fce52" />
        <path d="M613 418l4-3 2 2-4 3" stroke="#2f8fc0" fill="none" strokeDasharray="2 1" />
        <Ground x={418} y={401} h={17} />
        <Ground x={810} y={627} h={18} />
    </svg>
);

const Compass = () => (
    <svg viewBox="1096 60 80 110" className="absolute top-[22px] right-[66px] h-[110px] w-20" role="img" aria-label="Compass">
        <g fill="#114f60" stroke="#c3d3f6" strokeWidth="1.800" strokeLinejoin="round">
            <path d="M1136 79c-15 7-32 32-32 54l32-18z" />
            <path d="M1136 79c15 7 32 32 32 54l-32-18z" />
            <path d="M1136 126l-34 20c0 26 69 26 69 0z" />
        </g>
        <path d="M1136 79v62" stroke="#c3d3f6" strokeWidth="1.800" />
        <path d="M1136 70v9" stroke="#f0b8a8" strokeWidth="2" />
        <circle cx="1135.500" cy="68" r="4" fill="#dcc8f0" />
        <path d="M1130 149l3-8h5l3 8z" fill="#d01414" />
        <g fontSize="11" fill="#c8c49c"><text x="1104" y="143">x</text><text x="1166" y="143">y</text></g>
        <text x="1136" y="78" fontSize="10" fill="#f0d8c0">z</text>
    </svg>
);

const Axes = () => (
    <svg viewBox="1190 798 48 44" className="absolute right-1 bottom-3 h-11 w-12 text-white" aria-hidden="true">
        <path d="M1211 809v19l-14 7M1211 828l16 8" fill="none" stroke="#f2f2f6" strokeWidth="1.200" />
        <g fill="#f2f2f6" fontSize="12"><text x="1210" y="809">z</text><text x="1194" y="838">x</text><text x="1227" y="838">y</text></g>
    </svg>
);

// hand-drawn notes pointing at the toolbar below
const Notes = () => (
    <svg viewBox="835 730 260 128" className="absolute right-[147px] -bottom-[3px] z-10 w-[260px]" role="img" aria-label="Notes A, B and D">
        <g fill="none" stroke="#2ade34" strokeWidth="4" strokeLinecap="round" strokeLinejoin="round">
            <path d="M854 807l-1 37M848 829l4 16 22-17" />
            <path d="M1001 798l33 51M1007 826l26 23-3-24" />
            <path d="M1068 776l8 76M1063 824l13 29 6-20" />
        </g>
        <g fill="#2ade34" stroke="#2ade34" strokeWidth="1.500">
            <text x="841" y="801" fontSize="34">D</text>
            <text x="969" y="781" fontSize="33" transform="rotate(8 980 770)">A</text>
            <text x="1056" y="763" fontSize="32">B</text>
        </g>
    </svg>
);

const AppIcon = () => (
    <svg viewBox="0 0 16 16" className="h-4 w-4 shrink-0" aria-hidden="true">
        <path d="M0 0h16v16H0z" fill="#0b0d12" />
        <ellipse cx="6" cy="5" rx="5" ry="2" transform="rotate(38 6 5)" fill="#8fb4b8" />
        <ellipse cx="8" cy="9" rx="2" ry="5" transform="rotate(-12 8 9)" fill="#dfe6e0" />
        <ellipse cx="11" cy="5" rx="3" ry="2" transform="rotate(-35 11 5)" fill="#c8683c" />
        <circle cx="8" cy="6" r="1.500" fill="#fff" />
    </svg>
);

const winBtn = 'flex h-[14px] w-4 items-center justify-center border border-t-white border-r-[#404040] border-b-[#404040] border-l-white bg-[#c8c6c4]';

const WindowButtons = () => (
    <div className="ml-auto flex pr-[2px]">
        {['Minimize', 'Restore', 'Close'].map((label) => (
            <button key={label} type="button" aria-label={label} className={`${winBtn} ${label === 'Close' ? 'ml-[2px]' : ''}`}>
                <svg viewBox="0 0 12 10" className="h-[10px] w-3" fill="none" stroke="#000" aria-hidden="true">
                    {label === 'Minimize' && <path d="M2 8.500h5" strokeWidth="2" />}
                    {label === 'Restore' && <path d="M4 1.500h6M4.500 1v3M4 2h6v4H8M2 4.500h6M2.500 4v5h5V5" strokeWidth="1.200" />}
                    {label === 'Close' && <path d="M2.500 1.500l7 7M9.500 1.500l-7 7" strokeWidth="1.600" />}
                </svg>
            </button>
        ))}
    </div>
);

const menus = ['Start', 'SmarTeam', 'File', 'Edit', 'View', 'Insert', 'Tools', 'Window', 'Help'];

const Logo = () => (
    <svg viewBox="0 0 44 32" className="mr-[5px] ml-auto h-8 w-11 shrink-0" role="img" aria-label="CATIA">
        <path d="M11 1c5-1 9 0 7 3-1 2-4 2-6 3" fill="none" stroke="#c2402a" strokeWidth="2" />
        <text x="3" y="18" fontSize="12" fontStyle="italic" fontWeight="bold" fill="#33305f">D</text>
        <text x="15" y="18" fontSize="12" fontStyle="italic" fontWeight="bold" fill="#e2894a">S</text>
        <text x="9" y="30" fontSize="9" fontStyle="italic" fontWeight="bold" fill="#33305f">CATIA</text>
    </svg>
);

// ---- taskbar pictograms, 16x16 ----
const taskGlyphs: Record<string, React.ReactNode> = {
    flag: (<g><path d="M2 3c2-1 4-1 5 0L6 7C5 6 3 6 1 7z" fill="#d8452c" /><path d="M8 3c2 1 4 1 6 0l-1 4c-2 1-4 1-6 0z" fill="#58a838" /><path d="M1 8c2-1 4-1 5 0l-1 5c-2-1-3-1-5 0z" fill="#3468c8" /><path d="M7 8c2 1 4 1 6 0l-1 5c-2 1-4 1-6 0z" fill="#e8b82c" /></g>),
    firefox: (<g><circle cx="8" cy="8" r="7" fill="#e07818" /><circle cx="7" cy="7" r="4" fill="#2c4c98" /><path d="M1 6c1-3 3-4 5-5-1 2 1 3 3 3-2 1-4 3-2 5 2 2 5 1 6-2 1 6-9 9-12 2z" fill="#f4a028" /></g>),
    outlook: (<g><path d="M1 1h14v14H1z" fill="#f7d88a" stroke="#b8862c" /><path d="M3 3h10v10H3z" fill="#fff6d8" stroke="#d0a040" strokeWidth=".8" /><circle cx="8" cy="8" r="4" fill="#fff" stroke="#b07818" strokeWidth="1.300" /><path d="M8 5v3h3" fill="none" stroke="#7a500c" /></g>),
    note: (<g><path d="M2 2l9-1 3 11-9 3z" fill="#e4f4fc" stroke="#3a7ab0" /><circle cx="7" cy="9" r="4" fill="#5aa8dc" /><path d="M6 10l7-8 1 1-7 8z" fill="#fff" stroke="#24507c" strokeWidth=".8" /></g>),
    folder: (<g stroke="#b08a20"><path d="M1 13V3h5l2 2h6v8z" fill="#f3d467" /><path d="M3 7h12l-2 6H1z" fill="#fbe79a" /></g>),
    search: (<g><path d="M1 4c0-4 6-4 6 0v6H3c-2 0-2-3-2-6z" fill="#fff" stroke="#111" /><path d="M4 3v6" stroke="#111" /><circle cx="11" cy="6" r="3.500" fill="#ffd8d0" stroke="#111" /><path d="M9 5h4" stroke="#b02020" /><path d="M8 9l5 5" stroke="#111" strokeWidth="2" /></g>),
    shield: (<g><path d="M1 2l7 2 6-2v6c0 4-4 6-6 7-3-1-7-4-7-7z" fill="#5c5aa8" stroke="#181848" /><path d="M3 5l9 8M5 3l8 9" stroke="#fff" strokeWidth="1.500" /><path d="M7 3l3 8" stroke="#c02c2c" /></g>),
    ati: (<g><path d="M0 2h16v12H0z" fill="#c8281c" /><text x="1" y="11" fontSize="8" fontStyle="italic" fontWeight="bold" fill="#fff">ATI</text></g>),
    net: (<g><path d="M6 2l8-1v8l-8 1z" fill="#b8dcf4" stroke="#3a78b8" /><path d="M1 7l6-1v6l-6 1z" fill="#8cc0ec" stroke="#3a78b8" /><circle cx="10" cy="12" r="3" fill="#2c5ca8" /></g>),
    tee: (<text x="3" y="13" fontSize="14" fontWeight="bold" fontFamily="Liberation Serif, serif" fill="#1fd03c" stroke="#1fd03c">T</text>),
    pointer: (<g><path d="M5 4l9 7-4 .5 2 4-2 .5-2-4-3 2z" fill="#c01818" stroke="#400808" strokeWidth=".7" /><path d="M1 1l2 2M5 0v2M0 5h2M9 1L8 3M1 9l2-2" stroke="#111" /></g>),
};

const TaskIcon: React.FC<{ name: string }> = ({ name }) => (
    <svg viewBox="0 0 16 16" className="h-4 w-4 shrink-0" aria-hidden="true">{taskGlyphs[name]}</svg>
);

const raised = 'border border-t-white border-r-[#404040] border-b-[#404040] border-l-white';
const sunken = 'border border-t-[#404040] border-r-white border-b-white border-l-[#404040]';
const taskBtn = 'flex h-[22px] w-[161px] items-center gap-[2px] pl-[2px] whitespace-nowrap';

export default function App() {
    return (
        <div className="flex min-h-screen flex-col bg-[#d0cfe5] font-['DejaVu_Sans_Condensed','Liberation_Sans',sans-serif] text-[11px] leading-[14px] text-black">
            <svg className="absolute h-0 w-0" aria-hidden="true">
                <defs>
                    <pattern id="dither" width="2" height="2" patternUnits="userSpaceOnUse">
                        <path d="M0 0h1v1H0zM1 1h1v1H1z" fill="#8f8e9c" fillOpacity=".75" />
                    </pattern>
                </defs>
            </svg>

            <header>
                <div className="flex h-[18px] items-center bg-linear-to-r from-black via-[#565656] to-[#c4c4c4] pl-[2px]">
                    <AppIcon />
                    <h1 className="pl-px font-bold text-[#d0cec6]">CATIA V5 - [PIE01_BOOL.CATAnalysis]</h1>
                    <WindowButtons />
                </div>
                <nav className="flex h-5 items-center border-b border-[#8f8ea0] bg-[#d3d1e9] pl-px">
                    <AppIcon />
                    {menus.map((m) => (
                        <button key={m} type="button" className={`h-[18px] pl-[9px] ${m === 'SmarTeam' ? 'pr-px' : 'pr-[9px]'} ${m === 'Start' ? 'bg-[#fbe0c0]' : ''}`}>
                            {m === 'SmarTeam' ? m : <><u>{m[0]}</u>{m.slice(1)}</>}
                        </button>
                    ))}
                    <WindowButtons />
                </nav>
            </header>

            <div className="flex flex-1">
                <main className="relative flex-1 border-l border-[#7c7b8c] bg-linear-to-b from-[#343367] via-[#46467a] via-62% to-[#aeaec0]">
                    <div className="pt-1 pl-1 text-[#f2f2f8]">
                        <div className="flex h-[18px] items-center">
                            <TreeIcon name="root" />
                            <span>Analysis Manager</span>
                        </div>
                        <TreeList items={tree} top />
                    </div>
                    <Model />
                    <Compass />
                    <Axes />
                    <Notes />
                </main>

                <aside role="toolbar" className="flex w-[38px] flex-col border-l-4 border-[#f3f2fb] bg-linear-to-r from-[#dddcf0] via-[#d3d1e9] via-70% to-[#b4b3c8]">
                    {rightTools.map((t, i) => {
                        if (t === '-') return <div key={i} className="h-[15px] pt-1 pl-px"><div className="h-[5px] w-[17px] border-r border-b border-[#85848f]" /></div>;
                        if (t === '=') return <div key={i} className="h-[7px] pt-[3px]"><div className="border-t border-b border-t-[#85848f] border-b-white" /></div>;
                        return <Tool key={i} id={t} />;
                    })}
                </aside>
            </div>

            <section className="flex flex-col gap-[10px] bg-linear-to-b from-white via-[#d0cfe5] via-8% to-[#d0cfe5] pt-1">
                {rows.map(([left, right], i) => (
                    <div key={i} className="grid grid-cols-8">
                        <div className="col-span-5 flex gap-[5px] pl-px">{left.map((g) => <Group key={g} items={g} />)}</div>
                        <div className="col-span-3 flex gap-[5px]">
                            {right.map((g) => <Group key={g} items={g} />)}
                            {i === 0 && <Logo />}
                        </div>
                    </div>
                ))}
            </section>

            <footer>
                <div className="flex h-7 items-center border-t-2 border-[#8a8998] pl-[2px]">
                    <label htmlFor="command" className="flex-1">Select an object or a command</label>
                    <input id="command" type="text" className={`h-[17px] w-[300px] bg-white px-1 ${sunken}`} />
                    <button type="button" aria-label="Power input" className={`ml-[2px] flex h-5 w-8 items-center justify-center ${raised}`}>
                        <svg viewBox="0 0 16 12" className="h-3 w-4" fill="none" stroke="#7c7b8a" aria-hidden="true"><path d="M2 2h7v6H2zM14 0v11H0M11 9h1" strokeWidth="1.300" /></svg>
                    </button>
                </div>
                <div className="flex h-[26px] items-center gap-[2px] border-t-2 border-[#e4e2e0] bg-[#c3c1c0] px-[2px]">
                    <button type="button" className={`flex h-[22px] items-center gap-px pr-[2px] font-bold ${raised}`}><TaskIcon name="flag" />Inicio</button>
                    <div className="mx-[6px] h-[18px] w-[3px] border-r border-l border-r-[#808080] border-l-white" />
                    <div className="flex gap-[7px]">
                        {['firefox', 'outlook', 'note'].map((n) => <a key={n} href="#" aria-label={n}><TaskIcon name={n} /></a>)}
                    </div>
                    <div className="mx-[6px] h-[18px] w-[3px] border-r border-l border-r-[#808080] border-l-white" />
                    <button type="button" className={`${taskBtn} ${raised}`}><TaskIcon name="outlook" />Elementos enviados - Mic...</button>
                    <button type="button" className={`${taskBtn} ${raised}`}><TaskIcon name="folder" />CATIA</button>
                    <button type="button" className={`${taskBtn} bg-[#dddbda] font-bold ${sunken}`}><AppIcon />CATIA V5 - [PIE01_BO...</button>
                    <div className="ml-auto flex h-[22px] items-center gap-[2px] border border-t-[#808080] border-r-white border-b-white border-l-[#808080] px-[2px]">
                        {['search', 'shield', 'outlook', 'ati', 'net', 'tee', 'pointer'].map((n) => <TaskIcon key={n} name={n} />)}
                        <time className="pr-1 pl-2">11:43</time>
                    </div>
                </div>
            </footer>
        </div>
    );
}
